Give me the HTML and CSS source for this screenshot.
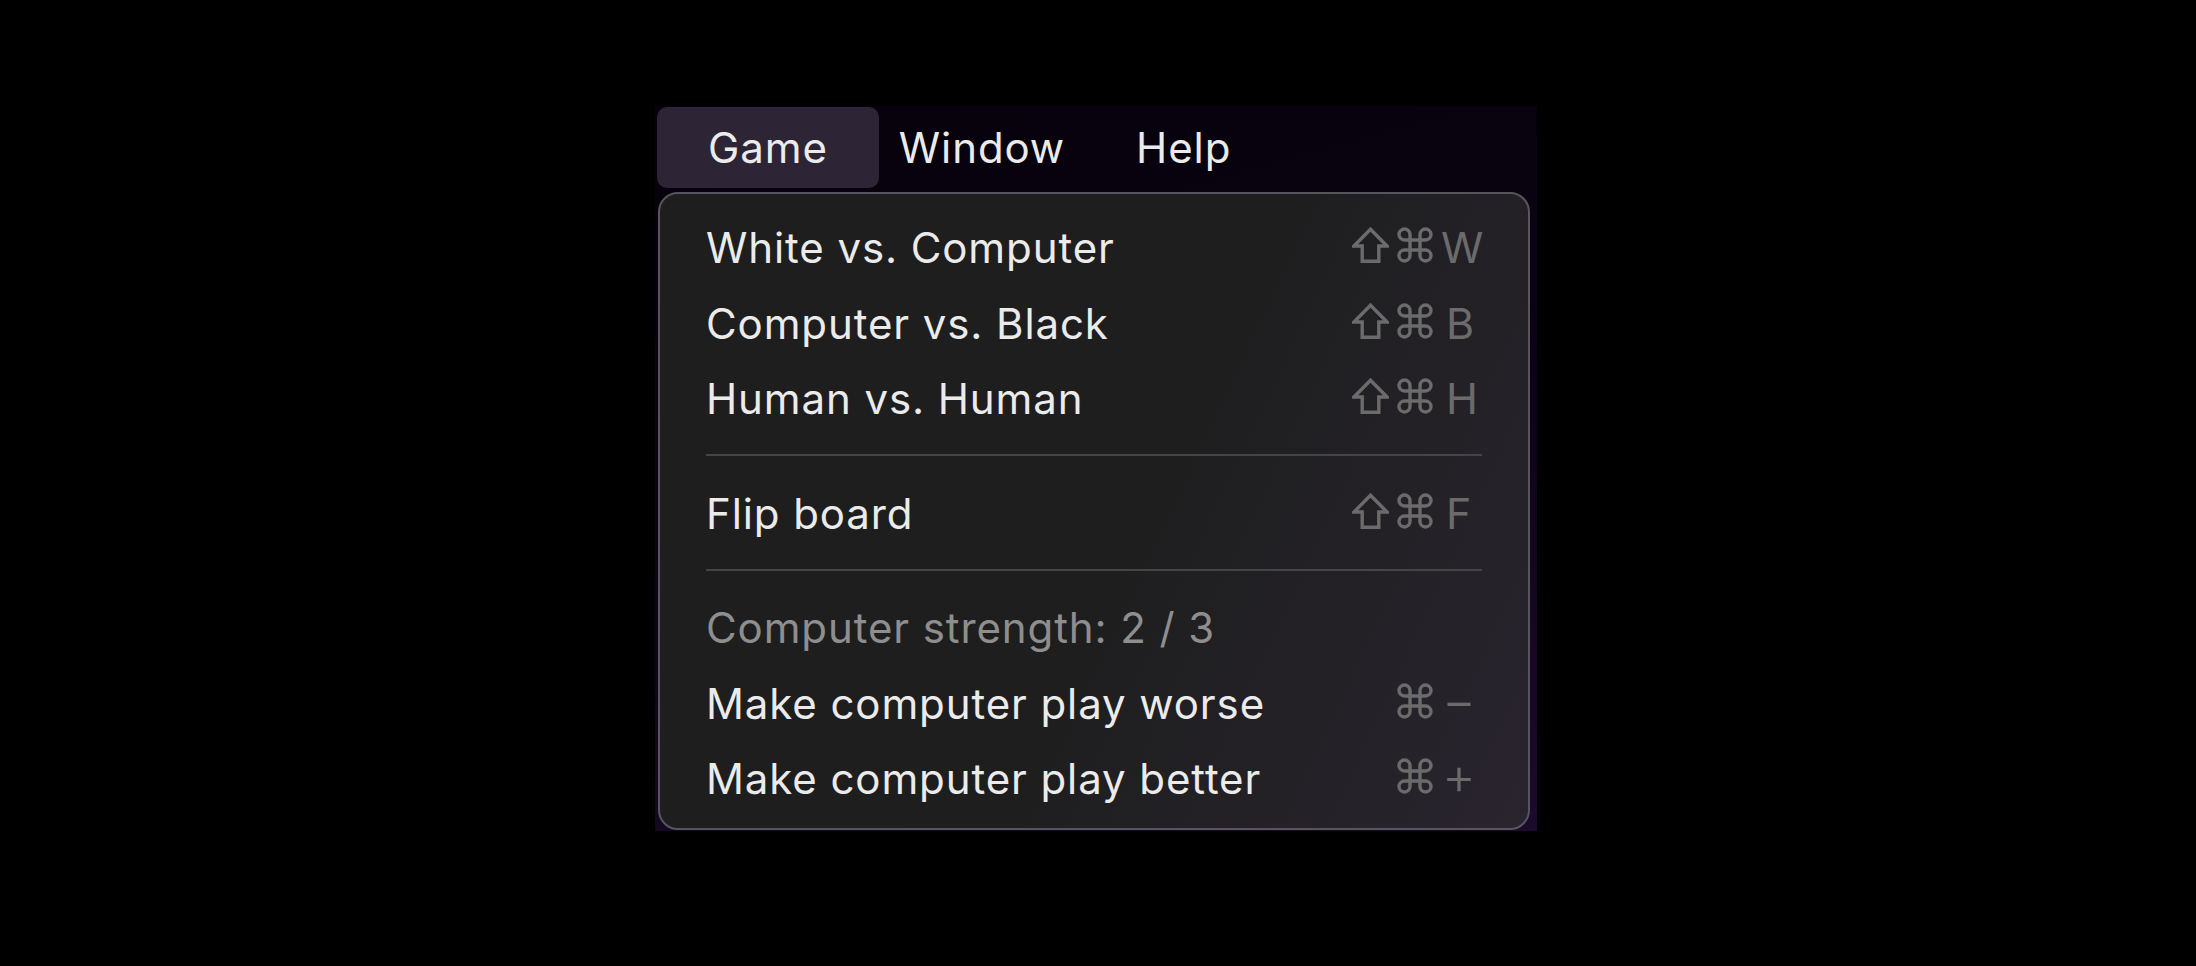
FILE: index.html
```html
<!DOCTYPE html>
<html lang="en">
<head>
<meta charset="utf-8">
<title>Game menu</title>
<link rel="stylesheet" href="styles.css">
</head>
<body>
<div class="panel">
  <nav class="menubar">
    <span class="title active">Game</span>
    <span class="title">Window</span>
    <span class="title">Help</span>
  </nav>
  <div class="menu">
    <div class="row"><span class="label">White vs. Computer</span><span class="keys"><svg class="shift" viewBox="0 0 37 36"><path d="M18.5 2.2 L35 19 H26.8 V34.3 H10.2 V19 H2 Z"/></svg><svg class="cmd" viewBox="0 0 36 36"><path d="M13 13 V7.5 A5.5 5.5 0 1 0 7.5 13 H28.5 A5.5 5.5 0 1 0 23 7.5 V28.5 A5.5 5.5 0 1 0 28.5 23 H7.5 A5.5 5.5 0 1 0 13 28.5 Z"/></svg><span class="key key-w">W</span></span></div>
    <div class="row"><span class="label">Computer vs. Black</span><span class="keys"><svg class="shift" viewBox="0 0 37 36"><path d="M18.5 2.2 L35 19 H26.8 V34.3 H10.2 V19 H2 Z"/></svg><svg class="cmd" viewBox="0 0 36 36"><path d="M13 13 V7.5 A5.5 5.5 0 1 0 7.5 13 H28.5 A5.5 5.5 0 1 0 23 7.5 V28.5 A5.5 5.5 0 1 0 28.5 23 H7.5 A5.5 5.5 0 1 0 13 28.5 Z"/></svg><span class="key">B</span></span></div>
    <div class="row"><span class="label">Human vs. Human</span><span class="keys"><svg class="shift" viewBox="0 0 37 36"><path d="M18.5 2.2 L35 19 H26.8 V34.3 H10.2 V19 H2 Z"/></svg><svg class="cmd" viewBox="0 0 36 36"><path d="M13 13 V7.5 A5.5 5.5 0 1 0 7.5 13 H28.5 A5.5 5.5 0 1 0 23 7.5 V28.5 A5.5 5.5 0 1 0 28.5 23 H7.5 A5.5 5.5 0 1 0 13 28.5 Z"/></svg><span class="key">H</span></span></div>
    <div class="sep"></div>
    <div class="row"><span class="label">Flip board</span><span class="keys"><svg class="shift" viewBox="0 0 37 36"><path d="M18.5 2.2 L35 19 H26.8 V34.3 H10.2 V19 H2 Z"/></svg><svg class="cmd" viewBox="0 0 36 36"><path d="M13 13 V7.5 A5.5 5.5 0 1 0 7.5 13 H28.5 A5.5 5.5 0 1 0 23 7.5 V28.5 A5.5 5.5 0 1 0 28.5 23 H7.5 A5.5 5.5 0 1 0 13 28.5 Z"/></svg><span class="key">F</span></span></div>
    <div class="sep"></div>
    <div class="row disabled"><span class="label">Computer strength: 2 / 3</span></div>
    <div class="row"><span class="label">Make computer play worse</span><span class="keys"><span class="noshift"></span><svg class="cmd" viewBox="0 0 36 36"><path d="M13 13 V7.5 A5.5 5.5 0 1 0 7.5 13 H28.5 A5.5 5.5 0 1 0 23 7.5 V28.5 A5.5 5.5 0 1 0 28.5 23 H7.5 A5.5 5.5 0 1 0 13 28.5 Z"/></svg><span class="key sym">&minus;</span></span></div>
    <div class="row"><span class="label">Make computer play better</span><span class="keys"><span class="noshift"></span><svg class="cmd" viewBox="0 0 36 36"><path d="M13 13 V7.5 A5.5 5.5 0 1 0 7.5 13 H28.5 A5.5 5.5 0 1 0 23 7.5 V28.5 A5.5 5.5 0 1 0 28.5 23 H7.5 A5.5 5.5 0 1 0 13 28.5 Z"/></svg><span class="key sym">+</span></span></div>
  </div>
</div>
</body>
</html>
```

FILE: styles.css
```css
html, body {
  margin: 0;
  background: #000;
}
body {
  padding: 106px 0 0 655px;
  font-family: "Inter", "Noto Sans", sans-serif;
  color: #ebebeb;
}
.panel {
  width: 882px;
  height: 725px;
  box-sizing: border-box;
  padding: 1px 7px 0 2px;
  background: linear-gradient(165deg, #06010b 0%, #0a0312 45%, #1c0a2c 100%);
}
.menubar {
  display: flex;
  height: 81px;
  line-height: 81px;
  font-size: 42px;
  letter-spacing: 0.9px;
}
.title {
  padding: 0 35.5px;
  white-space: nowrap;
}
.title.active {
  padding: 0 51px;
  margin-right: -15.5px;
  background: #2d2535;
  border-radius: 10px;
}
.menu {
  margin: 4px 0 0 1px;
  width: 872px;
  height: 638px;
  box-sizing: border-box;
  border: 2px solid #57555b;
  border-radius: 20px;
  padding: 16px 46px 0;
  background: linear-gradient(115deg, #1e1e1e 0%, #1e1e1f 55%, #29242e 100%);
  font-size: 42px;
  letter-spacing: 0.9px;
}
.row {
  display: flex;
  align-items: baseline;
  justify-content: space-between;
  height: 75.5px;
  line-height: 75.5px;
  white-space: nowrap;
}
.row.disabled .label {
  color: #8e8e8e;
}
.sep {
  height: 2px;
  margin: 17.5px 0 19.5px;
  background: #454545;
}
.keys {
  display: inline-flex;
  align-items: baseline;
  color: #6b6b6b;
  letter-spacing: 0;
}
.keys svg {
  fill: none;
  stroke: #6b6b6b;
  stroke-width: 3.4;
  stroke-linejoin: miter;
}
.shift {
  width: 37px;
  height: 36px;
  margin-right: 8px;
}
.noshift {
  display: inline-block;
  width: 37px;
  margin-right: 8px;
}
.cmd {
  width: 36px;
  height: 36px;
  margin-right: 13px;
}
.key {
  display: inline-block;
  width: 36px;
  font-size: 43px;
}
.key-w {
  margin-left: -5px;
  width: 41px;
}
.key.sym {
  font-size: 52px;
  line-height: 1;
  font-weight: 300;
  margin-left: -4px;
  width: 40px;
}
```
